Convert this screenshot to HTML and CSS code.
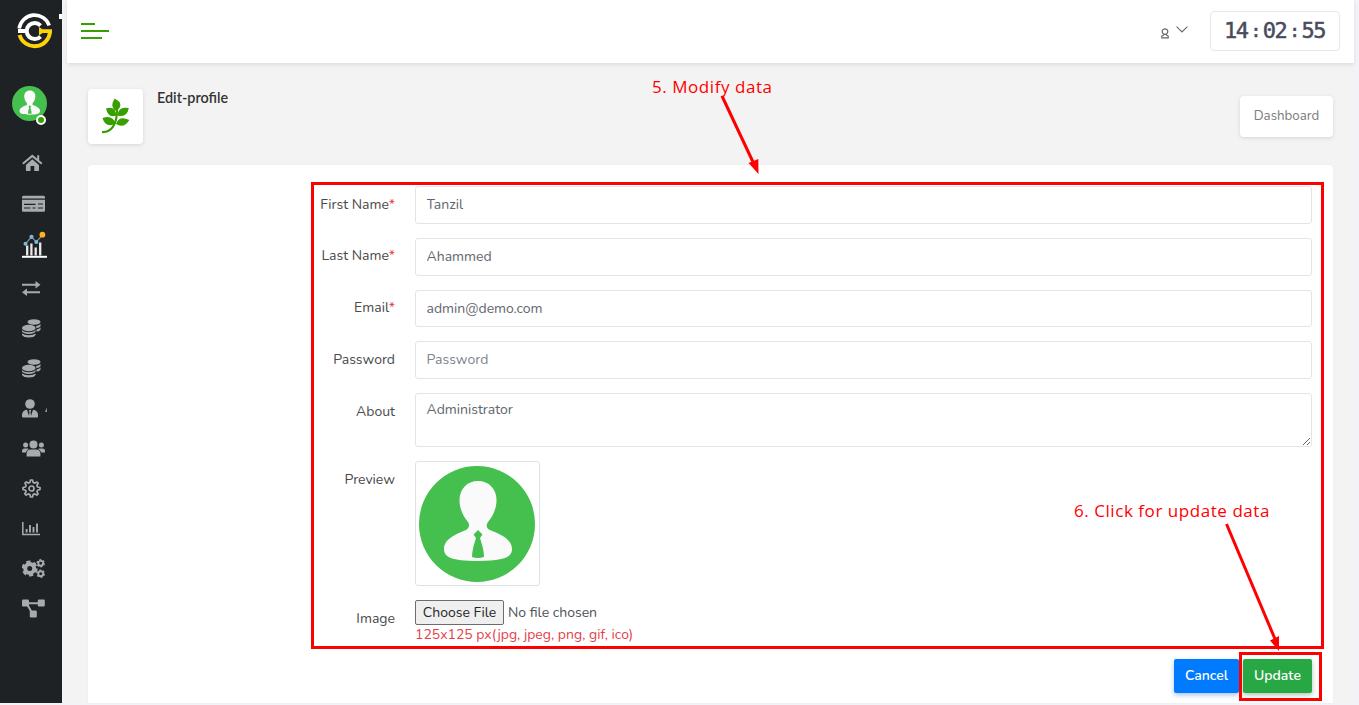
FILE: index.html
```html
<!DOCTYPE html>
<html lang="en">
<head>
<meta charset="utf-8">
<title>Edit-profile</title>
<link rel="stylesheet" href="styles.css">
</head>
<body>
<svg class="defs" width="0" height="0">
  <symbol id="avatar" viewBox="0 0 116 116">
    <circle cx="58" cy="58" r="58" fill="#45bf4d"/>
    <path fill="#fafafa" d="M59 15C48 15 40.500 23 40.500 34C40.500 44 45 51 49 56C51 59 50 62 47 64C40 67 25 72 25 83C25 91 32 95 59 95C86 95 93 91 93 83C93 72 78 67 71 64C67 62 67 59 69 56C73 51 77.500 44 77.500 34C77.500 23 70 15 59 15Z"/>
    <path fill="#45bf4d" d="M59 64L63.500 68.500L61 72C63 78 65 85 65 91Q59 93 53 91C53 85 55 78 57 72L54.500 68.500Z"/>
  </symbol>
  <symbol id="coins" viewBox="0 0 19 19">
    <g fill="#a7abae"><ellipse cx="12" cy="3" rx="6.500" ry="2.700"/>
    <path d="M14 7.200Q17.500 6.500 18.500 5V7.300Q17.500 9 14.500 9.200ZM14.500 10.600Q17.500 10 18.500 8.500V10.700Q17 12.500 14.500 12.600Z"/>
    <ellipse cx="6.800" cy="9" rx="6.800" ry="3.300"/>
    <path d="M0 11Q2 13.200 6.800 13.200T13.600 11V12.600Q12 15 6.800 15T0 12.600ZM0 14.500Q2 16.300 6.800 16.300T13.600 14.500V16Q12 18.500 6.800 18.500T0 16Z"/></g>
  </symbol>
</svg>
<div class="app">
  <aside class="sidebar">
    <svg class="logo" viewBox="0 0 36 36">
      <g fill="none">
        <path d="M2.200 15.500A15.500 15.500 0 0 1 32.200 12.500" stroke="#fff" stroke-width="3.600"/>
        <path d="M1 18H10.500" stroke="#fff" stroke-width="4"/>
        <path d="M23.500 12.500A8 8 0 1 0 23.500 23.500" stroke="#fff" stroke-width="4"/>
        <path d="M2.600 22A15.500 15.500 0 0 0 33 18" stroke="#fcd30a" stroke-width="4"/>
        <path d="M22 14L25.500 16.300H35V20H25.500L22 22.500Z" fill="#fcd30a"/>
      </g>
    </svg>
    <span class="brand-edge"></span>
    <div class="user"><svg class="user-pic"><use href="#avatar"/></svg><span class="online"></span></div>
    <nav class="menu">
      <a class="item"><svg width="21" height="18" viewBox="0 0 21 18"><path fill="#a7abae" d="M10.300 5.300L17 11V16.500Q17 17 16.400 17H12.300V12H8.500V17H4.500Q3.900 17 3.900 16.400V11Z"/><path d="M.8 9.800L10.300 1.900L19.800 9.800M16.200 1.300V6" fill="none" stroke="#a7abae" stroke-width="2"/></svg></a>
      <a class="item"><svg width="23" height="17" viewBox="0 0 23 17"><path fill="#a7abae" d="M0 2.500Q0 .8 1.200 .8H21.800Q23 .8 23 2.500V3.500H0ZM0 4.700H23V15.500Q23 16.700 21.800 16.700H1.200Q0 16.700 0 15.500Z"/><path d="M2 9.300H13.500M2 13H8.500M10.500 13H13.500M16 9H21M16 13H21" stroke="#1e2225" stroke-width="1.200"/></svg></a>
      <a class="item item-tall"><svg width="26" height="27" viewBox="0 0 26 27"><path d="M0 25.800H25" stroke="#fff" stroke-width="2"/><path d="M5.200 24.500V14.500M9.400 24.500V12.500M13.700 24.500V16.500M18.200 24.500V11.500" stroke="#e8e8e8" stroke-width="2.300"/><path d="M3.500 12.800L9.500 5.800L14.300 10.900L20.500 3.800" fill="none" stroke="#8c9398" stroke-width="1.200"/><g fill="#77bce0"><circle cx="3.500" cy="12.800" r="2"/><circle cx="9.500" cy="5.800" r="2.100"/><circle cx="14.300" cy="10.900" r="2"/></g><circle cx="20.400" cy="3.700" r="2.900" fill="#f7b519"/></svg></a>
      <a class="item"><svg width="19" height="15" viewBox="0 0 19 15"><path d="M0 3.800H15M3 11.200H18" stroke="#a7abae" stroke-width="2"/><path fill="#a7abae" d="M13.500 0L18.500 3.800L13.500 7.500ZM5 7.400L0 11.200L5 15Z"/></svg></a>
      <a class="item"><svg width="19" height="19"><use href="#coins"/></svg></a>
      <a class="item"><svg width="19" height="19"><use href="#coins"/></svg></a>
      <a class="item"><svg width="26" height="19" viewBox="0 0 26 19"><circle cx="8" cy="5" r="4.800" fill="#a7abae"/><path fill="#a7abae" d="M5 10.800L7 17L7.500 13L6.800 11H9.200L8.500 13L9 17L11 10.800Q16 11.500 16 16V17.500Q16 18.500 15 18.500H1Q0 18.500 0 17.500V16Q0 11.500 5 10.800Z"/><path fill="#d2d3d4" d="M24.600 8.500V13H23.300Z"/></svg></a>
      <a class="item"><svg width="23" height="17" viewBox="0 0 23 17"><g fill="#a7abae"><circle cx="11.500" cy="4.400" r="4"/><circle cx="3.600" cy="5" r="2.500"/><circle cx="19.400" cy="5" r="2.500"/><path d="M4.600 16.500V13.500Q5 9.500 8.800 9.500H14.200Q18 9.500 18.400 13.500V16.500ZM0 12.500V11Q0 8.500 2.500 8.500H5.500Q6.300 8.500 6.900 9Q4.300 10 3.900 12.500ZM23 12.500V11Q23 8.500 20.500 8.500H17.500Q16.700 8.500 16.100 9Q18.700 10 19.100 12.500Z"/></g></svg></a>
      <a class="item"><svg width="19" height="19" viewBox="0 0 19 19"><g fill="none" stroke="#a7abae" stroke-width="1.700"><circle cx="9.500" cy="9.500" r="2.500"/><path stroke-linejoin="round" d="M8.500 1H10.500L11.200 3.500L12.700 4.100L15 3L16.200 4.300L14.900 6.500L15.500 8L18 8.500V10.500L15.500 11.200L14.900 12.700L16.100 15L14.800 16.100L12.600 14.900L11.100 15.500L10.500 18H8.500L7.900 15.500L6.300 14.900L4.200 16.100L2.800 14.800L4.100 12.600L3.500 11.200L1 10.500V8.500L3.500 8L4.100 6.300L2.900 4.100L4.300 2.900L6.300 4.100L7.900 3.500Z"/></g></svg></a>
      <a class="item"><svg width="19" height="15" viewBox="0 0 19 15"><path d="M.8 1V13.400H18" fill="none" stroke="#a7abae" stroke-width="1.500"/><path d="M4.600 11.500V8M8 11.500V4M11.500 11.500V6M15 11.500V2.500" stroke="#a7abae" stroke-width="1.900"/></svg></a>
      <a class="item"><svg width="23" height="19" viewBox="0 0 23 19"><g fill="none" stroke="#a7abae"><circle cx="7.700" cy="9.500" r="4.500" stroke-width="4"/><circle cx="7.700" cy="9.500" r="6.900" stroke-width="2.200" stroke-dasharray="4.200 3.025"/><circle cx="18.700" cy="4.300" r="2.400" stroke-width="1.900"/><circle cx="18.700" cy="4.300" r="3.600" stroke-width="1.300" stroke-dasharray="2 1.770"/><circle cx="18.700" cy="14.700" r="2.400" stroke-width="1.900"/><circle cx="18.700" cy="14.700" r="3.600" stroke-width="1.300" stroke-dasharray="2 1.770"/></g></svg></a>
      <a class="item"><svg width="23" height="19" viewBox="0 0 23 19"><path d="M5 4.200H18M5 5L9.500 13" stroke="#a7abae" stroke-width="2"/><g fill="#a7abae"><rect y=".5" width="7" height="7" rx="1.200"/><rect x="15.800" y=".5" width="7" height="7" rx="1.200"/><rect x="7.800" y="11.500" width="7" height="7" rx="1.200"/></g></svg></a>
    </nav>
  </aside>
  <main class="main">
    <header class="topbar">
      <div class="toggle"><i></i><i></i><i></i></div>
      <div class="account">
        <svg width="8" height="11" viewBox="0 0 8 11"><g fill="none" stroke="#666" stroke-width="1.200"><circle cx="4" cy="3.600" r="2.800"/><path d="M2.700 6.200V7L.8 8.100V9.800H7.200V8.100L5.300 7V6.200"/></g></svg>
        <svg class="chevron" width="12" height="7" viewBox="0 0 12 7"><path d="M.6 .6L6 5.900L11.400 .6" fill="none" stroke="#666" stroke-width="1.100"/></svg>
      </div>
      <div class="clock"><span>14</span><span>:</span><span>02</span><span>:</span><span>55</span></div>
    </header>
    <section class="heading">
      <div class="tile"><svg width="28" height="36" viewBox="0 0 28 36"><path d="M0 34C9 34.500 15 27 15 12" fill="none" stroke="#37a000" stroke-width="2.200"/><g fill="#37a000"><path d="M12.800 .5Q7.500 8 13 12.500H15.500Q20 8 17.500 4Q16 2.500 12.800 .5ZM4 10.500Q13 7 14.500 17.500Q6 20.500 4 10.500ZM15.500 17.500Q16 8 26.800 10Q25 20 15.500 17.500ZM.5 20Q11 16.500 13.500 26Q3 30 .5 20ZM14 26Q17 17 27.300 22Q22 31 14 26Z"/></g></svg></div>
      <h1>Edit-profile</h1>
      <a class="crumb">Dashboard</a>
    </section>
    <section class="card">
      <form class="form">
        <label>First Name<b>*</b></label><input type="text" value="Tanzil">
        <label>Last Name<b>*</b></label><input type="text" value="Ahammed">
        <label>Email<b>*</b></label><input type="text" value="admin@demo.com">
        <label>Password</label><input type="password" placeholder="Password">
        <label>About</label><textarea>Administrator</textarea>
        <label>Preview</label><div class="thumb"><svg width="116" height="116"><use href="#avatar"/></svg></div>
        <label>Image</label>
        <div class="upload"><div class="pick"><button type="button">Choose File</button><span>No file chosen</span></div><p>125x125 px(jpg, jpeg, png, gif, ico)</p></div>
      </form>
      <div class="actions"><button class="cancel">Cancel</button><button class="update">Update</button></div>
    </section>
  </main>
</div>
<div class="box box-form"></div>
<div class="box box-update"></div>
<span class="note note-modify">5. Modify data</span>
<span class="note note-click">6. Click for update data</span>
<svg class="arrows" viewBox="0 0 1359 705"><g stroke="#f00" stroke-width="3"><path d="M722 96L753 162"/><path d="M1226.500 524L1275 639"/></g><path fill="#f00" d="M758.500 174L748.500 163L758.300 159ZM1279 651L1270 640.500L1279 636Z"/></svg>
</body>
</html>
```
FILE: styles.css
```css
* { box-sizing: border-box; }
body { margin: 0; width: 1359px; height: 705px; overflow: hidden; background: #f1f3f6; font-family: Nunito, "Open Sans", sans-serif; font-size: 14px; color: #4d5257; position: relative; }
.defs { position: absolute; }
.app { display: flex; height: 703px; width: 1354px; background: #f3f3f3; }
.sidebar { width: 62px; background: #1e2225; position: relative; flex: none; }
.logo { display: block; width: 36px; height: 36px; margin: 13px 0 0 17px; }
.brand-edge { position: absolute; left: 59px; top: 14px; width: 3px; height: 5px; background: #fff; }
.user { position: relative; width: 35px; height: 35px; margin: 37px 0 0 12px; }
.user-pic { display: block; width: 35px; height: 35px; }
.online { position: absolute; left: 24px; top: 29px; width: 10px; height: 10px; border-radius: 50%; background: #37a000; border: 2px solid #fff; }
.menu { margin-top: 22px; }
.item { display: flex; align-items: center; height: 40px; padding-left: 22px; }
.item-tall { height: 45px; padding-bottom: 2px; }
.main { flex: 1; padding-left: 5px; display: flex; flex-direction: column; }
.topbar { height: 63px; flex: none; background: #fff; box-shadow: 0 2px 4px rgba(0,0,0,.09); display: flex; align-items: center; padding: 0 14px 2px; }
.toggle { display: flex; flex-direction: column; gap: 5px; }
.toggle i { display: block; height: 2px; width: 14px; background: #37a000; }
.toggle i:nth-child(2) { width: 28px; }
.toggle i:nth-child(3) { width: 21px; }
.account { margin-left: auto; display: flex; align-items: center; gap: 7px; padding-top: 2px; }
.account svg:first-child { margin-top: 3px; }
.chevron { margin-top: -5px; }
.clock { display: flex; align-items: center; justify-content: space-between; width: 130px; height: 40px; margin-left: 22px; padding: 0 14px 0 13px; border: 1px solid #e5e7e9; border-radius: 4px; font: 400 22px/24px "DejaVu Sans Mono", monospace; letter-spacing: -1.500px; color: #494b5c; -webkit-text-stroke: .5px #494b5c; }
.clock span:nth-child(even) { font-size: 18px; }
.heading { display: flex; align-items: flex-start; padding: 26px 21px 0; height: 102px; flex: none; }
.tile { width: 55px; height: 55px; background: #fff; border-radius: 4px; box-shadow: 0 1px 4px rgba(0,0,0,.12); display: flex; align-items: center; justify-content: center; }
.tile svg { margin-bottom: 1px; }
h1 { margin: 0 0 0 14px; font: 600 14.4px/18px Lato, sans-serif; color: #333; }
.crumb { margin: 7px 0 0 auto; width: 93px; height: 41px; line-height: 40px; text-align: center; background: #fff; border-radius: 4px; box-shadow: 0 1px 4px rgba(0,0,0,.12); font-size: 13.300px; color: #7b7b7b; }
.card { flex: 1; margin: 0 21px; background: #fff; border-radius: 4px 4px 0 0; box-shadow: 0 0 2px rgba(0,0,0,.05); padding: 21px 21px 0; }
.form { display: grid; grid-template-columns: 286px 897px; grid-template-rows: repeat(4, 37.750px) 54px 125px 43px; column-gap: 20px; row-gap: 14px; }
label { text-align: right; line-height: 20px; padding-top: 8.500px; color: #494949; white-space: nowrap; }
label b { font-weight: 400; color: #e53b47; }
input, textarea { width: 100%; height: 100%; border: 1px solid #e2e4e7; border-radius: 3px; padding: 0 10.500px .5px; font: inherit; color: #5f666d; background: #fff; margin: 0; outline: none; }
textarea { padding-top: 6px; line-height: 20px; display: block; }
input::placeholder { color: #7d848b; }
.thumb { width: 125px; height: 125px; border: 1px solid #dee2e6; border-radius: 3px; display: flex; align-items: center; justify-content: center; padding-right: 1px; }
.pick { display: flex; align-items: center; gap: 4px; height: 25px; white-space: nowrap; }
.pick button { width: 89px; height: 25px; padding: 0; font: inherit; background: #efefef; color: #262626; border: 1px solid #6d6d6d; border-radius: 2px; }
.upload p { margin: 0; line-height: 19px; color: #e63f4b; white-space: nowrap; }
.actions { display: flex; justify-content: flex-end; gap: 4px; padding-top: 16px; }
.actions button { height: 34px; border: 0; border-radius: 2px; color: #fff; font: inherit; font-weight: 600; padding: 0 0 1px; }
.cancel { width: 65px; background: #007bff; box-shadow: 0 2px 5px rgba(0,80,220,.35); }
.update { width: 69px; background: #28a745; box-shadow: 0 2px 5px rgba(40,120,60,.4); }
.box { position: absolute; border: 3px solid #f00; }
.box-form { left: 311px; top: 182px; width: 1013px; height: 467px; }
.box-update { left: 1239px; top: 652px; width: 83px; height: 49px; }
.note { position: absolute; font: 400 17px/24px "Open Sans", sans-serif; letter-spacing: .55px; color: #f00; white-space: nowrap; }
.note-modify { left: 652px; top: 75px; }
.note-click { left: 1074px; top: 499px; }
.arrows { position: absolute; left: 0; top: 0; width: 1359px; height: 705px; pointer-events: none; }
```
